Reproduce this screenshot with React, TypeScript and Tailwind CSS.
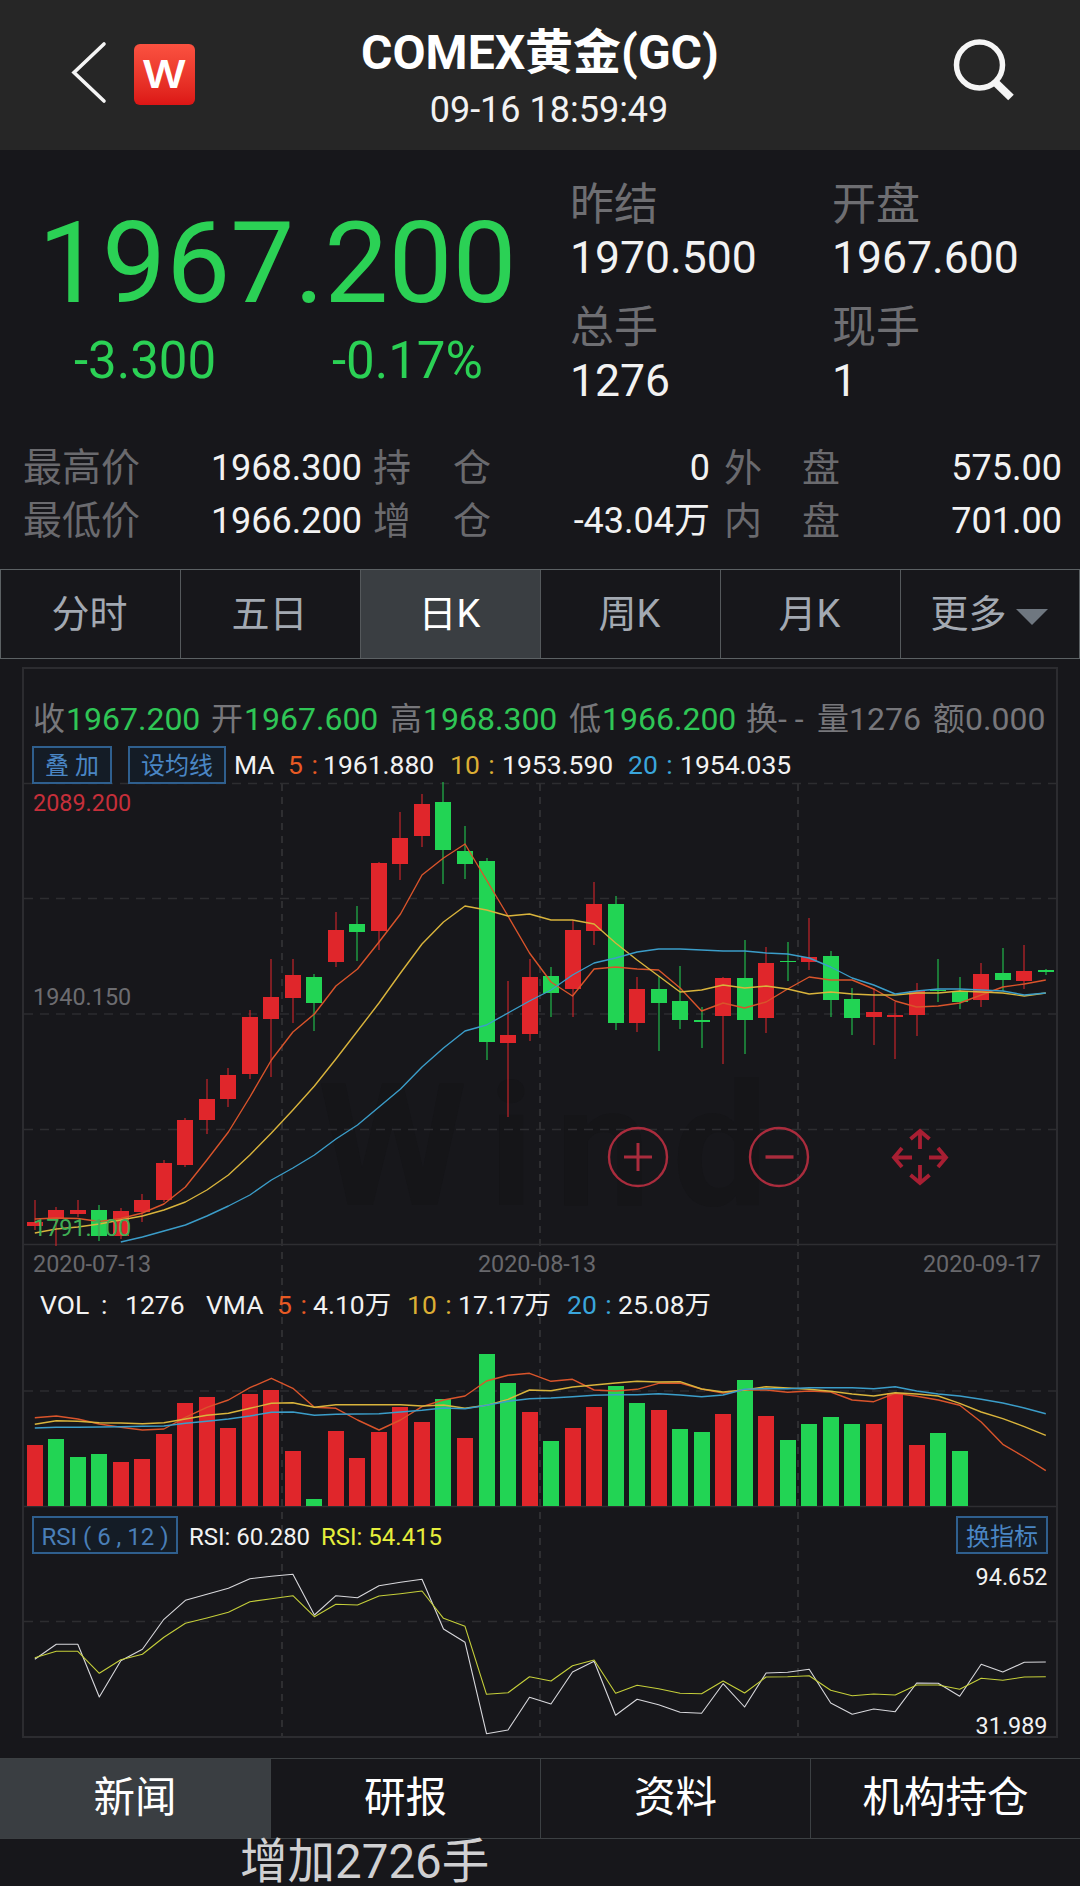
import { useState } from 'react';

type Candle = [dir: 'r' | 'g', top: number, bottom: number, high: number, low: number];

const RED = '#e0262b';
const GREEN = '#22d454';
const ORANGE = '#d9542b';
const YELLOW = '#d9b43c';
const BLUE = '#3b9dc9';

const candles: Candle[] = [
  ['r', 1222, 1226, 1200, 1230], ['r', 1210, 1219, 1207, 1246], ['r', 1210, 1214, 1200, 1217],
  ['g', 1210, 1236, 1205, 1241], ['r', 1211, 1236, 1208, 1239], ['r', 1200, 1212, 1194, 1222],
  ['r', 1163, 1200, 1160, 1202], ['r', 1120, 1165, 1118, 1167], ['r', 1099, 1120, 1079, 1134],
  ['r', 1075, 1099, 1068, 1107], ['r', 1017, 1074, 1010, 1079], ['r', 997, 1019, 959, 1077],
  ['r', 975, 998, 959, 1023], ['g', 977, 1003, 974, 1031], ['r', 930, 962, 912, 967],
  ['g', 924, 932, 906, 961], ['r', 863, 931, 862, 950], ['r', 838, 864, 812, 880],
  ['r', 804, 836, 794, 847], ['g', 802, 850, 782, 884], ['g', 851, 864, 826, 879],
  ['g', 861, 1042, 858, 1060], ['r', 1035, 1043, 981, 1117], ['r', 977, 1034, 959, 1041],
  ['g', 976, 993, 967, 1017], ['r', 930, 989, 920, 1017], ['r', 904, 931, 882, 945],
  ['g', 904, 1023, 896, 1030], ['r', 989, 1023, 977, 1032], ['g', 989, 1003, 976, 1051],
  ['g', 1001, 1020, 966, 1029], ['g', 1020, 1022, 1007, 1048], ['r', 978, 1016, 977, 1064],
  ['g', 978, 1020, 940, 1054], ['r', 963, 1018, 947, 1033], ['g', 961, 962, 942, 981],
  ['r', 957, 962, 918, 970], ['g', 956, 1000, 951, 1017], ['g', 999, 1018, 988, 1035],
  ['r', 1012, 1017, 988, 1045], ['r', 1015, 1017, 1002, 1059], ['r', 991, 1015, 983, 1036],
  ['g', 990, 991, 959, 1002], ['g', 992, 1002, 977, 1009], ['r', 974, 1000, 963, 1007],
  ['g', 973, 980, 948, 991], ['r', 971, 981, 945, 989], ['g', 970, 972, 969, 975],
];

const ma5 = [1219, 1218, 1218.5, 1221.5, 1218.5, 1213, 1204, 1187, 1160, 1132, 1097, 1060, 1032, 1014, 986, 969, 942, 914, 875, 858, 844, 880, 916, 953, 982, 996, 969, 967, 969, 970, 988, 1011, 1003, 1008, 1002, 989, 977, 980, 980, 989, 1001, 1007, 1006, 1003, 995, 987, 984, 980];
const ma10 = [1233, 1229, 1227, 1224, 1220, 1216, 1210, 1202, 1190, 1175, 1155, 1133, 1110, 1086, 1059, 1031, 1003, 973, 944, 922, 906, 910, 916, 914, 920, 920, 924, 943, 960, 976, 992, 990, 985, 988, 986, 989, 994, 992, 994, 995, 995, 993, 993, 991, 992, 993, 996, 993];
const ma20 = [1242, 1237, 1231, 1225, 1216, 1206, 1195, 1180, 1168, 1155, 1139, 1125, 1107, 1089, 1067, 1048, 1031, 1025, 1013, 1001, 990, 975, 963, 958, 952, 949, 949, 950, 951, 951, 953, 954, 958, 967, 978, 985, 994, 991, 989, 989, 990, 991, 995, 993];

const volumes = [1445, 1439, 1457, 1454, 1462, 1459, 1434, 1403, 1397, 1428, 1394, 1390, 1451, 1499, 1431, 1458, 1432, 1407, 1422, 1399, 1438, 1354, 1383, 1412, 1441, 1428, 1407, 1386, 1403, 1410, 1429, 1432, 1414, 1380, 1416, 1440, 1424, 1417, 1424, 1424, 1393, 1445, 1433, 1451];
const volumeDirs = 'rgggrrrrrrrrrgrrrrrgrggrgrrggrggrgrggggrrrgg';

const vma5 = [293, 288, 297, 312, 322, 330, 327, 292, 262, 240, 203, 175, 205, 262, 265, 300, 330, 300, 260, 240, 228, 183, 166, 160, 184, 178, 210, 213, 208, 190, 189, 207, 219, 210, 210, 217, 213, 216, 240, 245, 220, 229, 240, 256, 306, 373, 411, 452];
const vma10 = [313, 302, 304, 308, 309, 311, 308, 297, 286, 280, 265, 250, 248, 262, 254, 254, 254, 254, 258, 255, 265, 256, 238, 210, 212, 201, 195, 189, 184, 186, 185, 207, 216, 210, 200, 204, 208, 214, 222, 228, 218, 222, 228, 250, 276, 296, 320, 346];
const vma20 = [324, 322, 322, 321, 320, 319, 318, 310, 304, 297, 288, 277, 276, 286, 283, 282, 281, 276, 271, 264, 266, 256, 244, 236, 234, 230, 226, 224, 224, 221, 225, 230, 225, 208, 206, 206, 203, 203, 203, 206, 200, 213, 222, 228, 238, 249, 264, 281];

const rsi6 = [298, 253, 253, 411, 302, 268, 178, 121, 103, 85, 56, 49, 43, 165, 107, 113, 77, 67, 58, 207, 247, 521, 510, 412, 432, 336, 304, 466, 418, 434, 457, 460, 371, 441, 339, 337, 328, 429, 463, 447, 455, 369, 370, 409, 313, 336, 307, 306];
const rsi12 = [293, 274, 274, 340, 299, 283, 232, 190, 174, 157, 125, 116, 107, 170, 133, 135, 108, 101, 93, 175, 199, 403, 398, 350, 363, 317, 300, 400, 376, 386, 400, 401, 363, 399, 351, 350, 347, 391, 407, 402, 405, 375, 375, 388, 355, 361, 351, 350];

const xAt = (i: number) => 34.8 + i * 21.51;

function Line({ data, color, start = 0, base = 0, scale = 1, width = 1.4 }: {
  data: number[]; color: string; start?: number; base?: number; scale?: number; width?: number;
}) {
  const points = data.map((v, i) => `${xAt(i + start).toFixed(1)},${(base + v * scale).toFixed(1)}`).join(' ');
  return <polyline points={points} fill="none" stroke={color} strokeWidth={width} strokeLinejoin="round" />;
}

function Chart() {
  return (
    <svg className="col-start-1 row-start-1 h-[1067px] w-[1032px] overflow-visible" viewBox="24 669 1032 1067">
      <text x="318" y="1205" fontSize="170" fontWeight="700" textLength="450" fill="#151518">Wind</text>

      <g stroke="#2d2d30" strokeWidth="1.5" strokeDasharray="9 7">
        {[783.5, 898.5, 1014, 1129.5, 1391, 1621.5].map((y) => (
          <line key={y} x1="24" x2="1056" y1={y} y2={y} />
        ))}
      </g>
      <g stroke="#2e2e31" strokeWidth="2" strokeDasharray="7 6">
        {[282, 540, 798].map((x) => (
          <line key={x} x1={x} x2={x} y1="784" y2="1736" />
        ))}
      </g>
      <g stroke="#2e2e32" strokeWidth="1.5">
        <line x1="24" x2="1056" y1="1244.5" y2="1244.5" />
        <line x1="24" x2="1056" y1="1506.5" y2="1506.5" />
      </g>

      {candles.map(([dir, top, bottom, high, low], i) => {
        const x = Math.round(xAt(i));
        const color = dir === 'r' ? RED : GREEN;
        return (
          <g key={i} fill={color}>
            <rect x={x - 0.6} y={high} width="1.2" height={low - high} opacity="0.85" />
            <rect x={x - 8} y={top} width="16" height={bottom - top} />
          </g>
        );
      })}
      <Line data={ma5} color={ORANGE} />
      <Line data={ma10} color={YELLOW} />
      <Line data={ma20} color={BLUE} start={4} />

      {volumes.map((top, i) => (
        <rect
          key={i}
          x={Math.round(xAt(i)) - 8}
          y={top}
          width="16"
          height={1506 - top}
          fill={volumeDirs[i] === 'r' ? RED : GREEN}
        />
      ))}
      <Line data={vma5} color={ORANGE} base={1320} scale={1 / 3} />
      <Line data={vma10} color={YELLOW} base={1320} scale={1 / 3} />
      <Line data={vma20} color={BLUE} base={1320} scale={1 / 3} />

      <Line data={rsi6} color="#d8d8dc" base={1560} scale={1 / 3} width={1.1} />
      <Line data={rsi12} color="#c5cf3a" base={1560} scale={1 / 3} width={1.1} />

      <g fontSize="23.4">
        <text x="33" y="811" fill="#c62f3a">2089.200</text>
        <text x="33" y="1005" fill="#6c6c70">1940.150</text>
        <text x="33" y="1236" fill="#3fae55">1791.100</text>
        <text x="1047.500" y="1585" fill="#f2f2f2" textAnchor="end">94.652</text>
        <text x="1047.500" y="1734" fill="#f2f2f2" textAnchor="end">31.989</text>
      </g>

      <g stroke="#aa2c3d" fill="none" strokeWidth="2.4">
        <circle cx="638" cy="1157" r="29" />
        <path d="M624 1157h28M638 1143v28" strokeWidth="3" />
        <circle cx="779" cy="1157" r="29" />
        <path d="M765.5 1157h28" strokeWidth="3.4" />
      </g>
      <g stroke="#a81f33" fill="none" strokeWidth="3.8">
        <path d="M920 1149v-17M910.500 1139l9.500-8 9.500 8" />
        <path d="M920 1165v17M910.500 1175l9.500 8 9.500-8" />
        <path d="M912 1157.500h-17M902 1148l-8 9.500 8 9.500" />
        <path d="M929 1157.500h17M938 1148l8 9.500-8 9.500" />
      </g>
    </svg>
  );
}

const quotes = [
  { label: '昨结', value: '1970.500' },
  { label: '开盘', value: '1967.600' },
  { label: '总手', value: '1276' },
  { label: '现手', value: '1' },
];

const details = [
  ['最高价', '1968.300', '持', '仓', '0', '外', '盘', '575.00'],
  ['最低价', '1966.200', '增', '仓', '-43.04万', '内', '盘', '701.00'],
];

const periods = ['分时', '五日', '日K', '周K', '月K', '更多'];
const sections = ['新闻', '研报', '资料', '机构持仓'];

const ohlc = [
  { label: '收', value: '1967.200', up: true },
  { label: '开', value: '1967.600', up: true },
  { label: '高', value: '1968.300', up: true },
  { label: '低', value: '1966.200', up: true },
  { label: '换', value: '- -' },
  { label: '量', value: '1276' },
  { label: '额', value: '0.000' },
];

export default function App() {
  const [period, setPeriod] = useState('日K');
  const [section, setSection] = useState('新闻');

  return (
    <div className="h-[1886px] w-[1080px] overflow-hidden bg-[#17171b] font-['Roboto','Noto_Sans_CJK_SC',sans-serif] text-[#f2f2f2]">
      <header className="grid h-[150px] grid-cols-[240px_600px_240px] bg-[#262626]">
        <div className="flex items-start gap-[27px] pt-[41px] pl-[70px]">
          <svg className="h-[64px] w-[37px]" viewBox="0 0 37 64" fill="none" stroke="#f5f5f5" strokeWidth="3.6">
            <path d="M34 3L4 31.500L34 60" strokeLinecap="round" />
          </svg>
          <div className="mt-[3px] flex h-[61px] w-[61px] items-center justify-center rounded-md bg-linear-to-b from-[#fb5140] to-[#dc1515] font-['Inter'] text-[38px] font-semibold text-white">
            <span className="scale-x-115">W</span>
          </div>
        </div>
        <div className="flex flex-col items-center pt-[23px]">
          <h1 className="text-[48px] leading-[60px] font-bold text-white">COMEX黄金(GC)</h1>
          <p className="pt-[6px] pl-[18px] text-[36px] leading-[42px]">09-16 18:59:49</p>
        </div>
        <div className="pt-[38px] pl-[111px]">
          <svg className="h-[66px] w-[66px]" viewBox="0 0 66 66" fill="none" stroke="#f5f5f5">
            <circle cx="28.500" cy="27" r="23" strokeWidth="5.500" />
            <path d="M44 44L60 59.500" strokeWidth="8" />
          </svg>
        </div>
      </header>

      <section className="grid h-[281px] grid-cols-[570px_262px_1fr] content-start">
        <div className="row-span-2 pt-[45px] text-[#2bd155]">
          <div className="pl-[38px] text-[114px] leading-[136px]">1967.200</div>
          <div className="flex text-[51px] leading-[60px]">
            <span className="w-[259px] pl-[74px]">-3.300</span>
            <span className="pl-[73px]">-0.17%</span>
          </div>
        </div>
        {quotes.map((q) => (
          <div key={q.label} className="h-[123px] pt-[31px]">
            <div className="text-[44px] leading-[48px] text-[#6e6e72]">{q.label}</div>
            <div className="text-[44.500px] leading-[58px]">{q.value}</div>
          </div>
        ))}
      </section>

      <section className="flex h-[138px] flex-col pt-[11px] text-[36px] leading-[53px]">
        {details.map((row) => (
          <div key={row[0]} className="grid grid-cols-[200px_162px_91px_40px_217px_92px_40px_220px] text-right">
            <span className="pl-[23px] text-left text-[39px] text-[#6a6a6e]">{row[0]}</span>
            <span>{row[1]}</span>
            <span className="pl-[11px] text-left text-[38px] text-[#6a6a6e]">{row[2]}</span>
            <span className="text-left text-[38px] text-[#6a6a6e]">{row[3]}</span>
            <span>{row[4]}</span>
            <span className="pl-[14px] text-left text-[38px] text-[#6a6a6e]">{row[5]}</span>
            <span className="text-left text-[38px] text-[#6a6a6e]">{row[6]}</span>
            <span>{row[7]}</span>
          </div>
        ))}
      </section>

      <nav className="grid h-[90px] grid-cols-[180px_180px_180px_180px_180px_1fr] divide-x divide-[#55595c] border border-[#5c6164] text-[38px]">
        {periods.map((p) => (
          <button
            key={p}
            onClick={() => setPeriod(p)}
            className={`flex items-center justify-center gap-[9px] pr-[2px] ${
              period === p ? 'bg-[#3a3e42] text-white' : 'text-[#a3a9b2]'
            }`}
          >
            {p}
            {p === '更多' && (
              <svg className="mt-[5px] h-[16px] w-[32px]" viewBox="0 0 32 16" fill="#6f7780">
                <path d="M0 0h32L16 16z" />
              </svg>
            )}
          </button>
        ))}
      </nav>

      <main className="mx-[22px] mt-[8px] grid h-[1071px] border-2 border-[#2c2c30]">
        <Chart />
        <div className="col-start-1 row-start-1 flex flex-col pt-[26px]">
          <div className="grid h-[40px] grid-cols-[178px_179px_179px_177px_71px_116px_auto] items-center pl-[9px] text-[32px] whitespace-nowrap text-[#77777b]">
            {ohlc.map((o) => (
              <span key={o.label}>
                {o.label}
                <span className={o.up ? 'ml-px text-[#2fc656]' : ''}>{o.value}</span>
              </span>
            ))}
          </div>

          <div className="mt-[11px] flex h-[38px] items-center pl-[8px] text-[26.5px] whitespace-pre">
            <button className="h-[38px] w-[80px] border-2 border-[#2f5f8e] bg-[#141c26] pt-px text-[24px] leading-[34px] text-[#4a86c4]">叠 加</button>
            <button className="mr-[8px] ml-[16px] h-[38px] w-[98px] border-2 border-[#2f5f8e] bg-[#141c26] pt-px text-[24px] leading-[34px] text-[#4a86c4]">设均线</button>
            <span className="w-[54px]">MA</span>
            <span className="w-[35px] text-[#e85a24] [word-spacing:2px]">5 :</span>
            <span className="w-[127px]">1961.880</span>
            <span className="w-[52px] text-[#dcae34] [word-spacing:2px]">10 :</span>
            <span className="w-[126px]">1953.590</span>
            <span className="w-[52px] text-[#3aa6dc] [word-spacing:2px]">20 :</span>
            <span>1954.035</span>
          </div>

          <div className="mt-[460px] flex h-[42px] items-center justify-between pr-[15px] pl-[9px] text-[23.4px] text-[#68686c]">
            <span>2020-07-13</span>
            <span>2020-08-13</span>
            <span>2020-09-17</span>
          </div>
          <div className="flex h-[38px] items-center pl-[16px] text-[26.5px] whitespace-pre">
            <span className="w-[61px]">VOL</span>
            <span className="w-[24px]">:</span>
            <span className="w-[81px]">1276</span>
            <span className="w-[71px]">VMA</span>
            <span className="w-[36px] text-[#e85a24] [word-spacing:2px]">5 :</span>
            <span className="w-[94px]">4.10万</span>
            <span className="w-[51px] text-[#dcae34] [word-spacing:2px]">10 :</span>
            <span className="w-[109px]">17.17万</span>
            <span className="w-[51px] text-[#3aa6dc] [word-spacing:2px]">20 :</span>
            <span>25.08万</span>
          </div>

          <div className="mt-[192px] flex h-[38px] items-center pr-[8px] pl-[8px] text-[24px]">
            <button className="h-[38px] w-[146px] border-2 border-[#2f5f8e] bg-[#141c26] pt-[2px] leading-[34px] text-[#4a7fb8]">RSI ( 6 , 12 )</button>
            <span className="ml-[11px] w-[132px] pt-[3px]">RSI: 60.280</span>
            <span className="pt-[3px] text-[#e6ee3c]">RSI: 54.415</span>
            <button className="ml-auto h-[38px] w-[92px] border-2 border-[#2f5f8e] bg-[#141c26] pt-[2px] leading-[34px] text-[#4a86c4]">换指标</button>
          </div>
        </div>
      </main>

      <nav className="mt-[20px] grid h-[81px] grid-cols-[271px_270px_270px_1fr] divide-x divide-[#3c4043] border-y border-[#3c4043] text-[41.5px] text-white">
        {sections.map((s) => (
          <button key={s} onClick={() => setSection(s)} className={section === s ? 'bg-[#3a3e42]' : ''}>
            {s}
          </button>
        ))}
      </nav>
      <p className="pl-[240px] text-[47.5px] leading-[46px] whitespace-nowrap text-[#d0d0d2]">增加2726手</p>
    </div>
  );
}
